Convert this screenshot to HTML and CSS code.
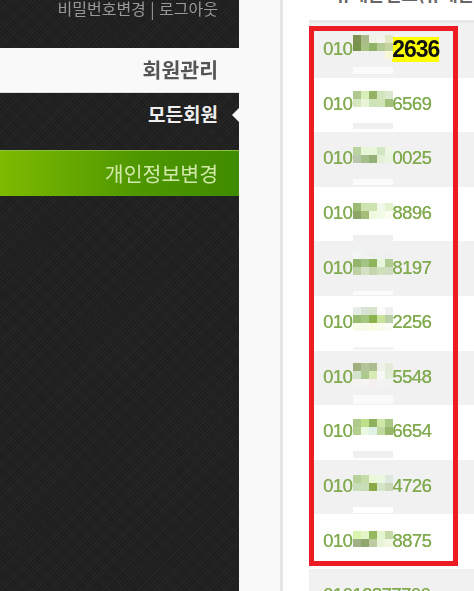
FILE: index.html
```html
<!DOCTYPE html>
<html lang="ko">
<head>
  <meta charset="UTF-8">
  <title>회원관리</title>
  <link rel="stylesheet" href="styles.css">
</head>
<body>
  <div class="sidebar">
    <div class="user-links">비밀번호변경 | 로그아웃</div>
    <div class="menu-title">회원관리</div>
    <div class="menu-sub">모든회원</div>
    <div class="menu-green">개인정보변경</div>
  </div>
  <div class="main">
    <div class="heading">휴대폰번호(휴대폰번호)</div>
    <div class="rows">
      <div class="row"><span>010</span><span class="hidden-no"></span><span class="hit">2636</span></div>
      <div class="row"><span>010</span><span class="hidden-no"></span><span>6569</span></div>
      <div class="row"><span>010</span><span class="hidden-no"></span><span>0025</span></div>
      <div class="row"><span>010</span><span class="hidden-no"></span><span>8896</span></div>
      <div class="row"><span>010</span><span class="hidden-no"></span><span>8197</span></div>
      <div class="row"><span>010</span><span class="hidden-no"></span><span>2256</span></div>
      <div class="row"><span>010</span><span class="hidden-no"></span><span>5548</span></div>
      <div class="row"><span>010</span><span class="hidden-no"></span><span>6654</span></div>
      <div class="row"><span>010</span><span class="hidden-no"></span><span>4726</span></div>
      <div class="row"><span>010</span><span class="hidden-no"></span><span>8875</span></div>
      <div class="row"><span>01012877700</span></div>
    </div>
  </div>

  <!-- 모자이크 -->
  <svg class="mosaic" width="40" height="591" shape-rendering="crispEdges">
    <rect y="67" width="40" height="7" fill="#fbfbfb"/>
    <rect y="123" width="40" height="6" fill="#f0f0f0"/>
    <rect y="179" width="40" height="6" fill="#fbfbfb"/>
    <rect y="235" width="40" height="6" fill="#f0f0f0"/>
    <rect y="291" width="40" height="4" fill="#fbfbfb"/>
    <rect y="347" width="40" height="3" fill="#f3f3f3"/>
    <rect y="395" width="40" height="9" fill="#fafafa"/>
    <rect y="451" width="40" height="7" fill="#f0f0f0"/>
    <rect y="507" width="40" height="6" fill="#fff"/>
    <g class="cells">
      <rect x="0" y="35" fill="#7d9150"/><rect x="8" y="35" fill="#a9b98a"/><rect x="16" y="35" fill="#eef3e6"/><rect x="24" y="35" fill="#f4f6ee"/><rect x="32" y="35" fill="#e3e8c0"/>
      <rect x="0" y="43" fill="#77954a"/><rect x="8" y="43" fill="#a8c184"/><rect x="16" y="43" fill="#8fb267"/><rect x="24" y="43" fill="#b5cb95"/><rect x="32" y="43" fill="#c4d3a0"/>
      <rect x="32" y="51" fill="#f8f8d8"/>

      <rect x="0" y="91" fill="#b0c78e"/><rect x="8" y="91" fill="#d8edb8"/><rect x="16" y="91" fill="#93b264"/><rect x="24" y="91" fill="#d3e6bb"/><rect x="32" y="91" fill="#dbe8cd"/>
      <rect x="0" y="99" fill="#d6e6bd"/><rect x="8" y="99" fill="#e8f4d8"/><rect x="16" y="99" fill="#cde3b8"/><rect x="24" y="99" fill="#cfe3b5"/><rect x="32" y="99" fill="#a2bf7c"/>

      <rect x="0" y="147" fill="#b8d3a0"/><rect x="8" y="147" fill="#e8f6d8"/><rect x="16" y="147" fill="#e8f6d8"/><rect x="24" y="147" fill="#d3e6c4"/><rect x="32" y="147" fill="#eef7e4"/>
      <rect x="0" y="155" fill="#b8c8ac"/><rect x="8" y="155" fill="#a5bf8c"/><rect x="16" y="155" fill="#93b078"/><rect x="24" y="155" fill="#e3f0d5"/><rect x="32" y="155" fill="#eaf5e0"/>

      <rect x="0" y="203" fill="#9dbc73"/><rect x="8" y="203" fill="#cfe3b0"/><rect x="16" y="203" fill="#cfe3b0"/><rect x="24" y="203" fill="#f2f9ea"/><rect x="32" y="203" fill="#e3f2cf"/>
      <rect x="0" y="211" fill="#8da568"/><rect x="8" y="211" fill="#a5bd78"/><rect x="16" y="211" fill="#f0f8e0"/><rect x="24" y="211" fill="#f4fae8"/><rect x="32" y="211" fill="#fbfdf3"/>

      <rect x="0" y="251" fill="#f3f6f6"/><rect x="8" y="251" fill="#f0f2f0"/><rect x="16" y="251" fill="#eef0ee"/><rect x="24" y="251" fill="#eff0f0"/><rect x="32" y="251" fill="#edeeee"/>
      <rect x="0" y="259" fill="#93b56c"/><rect x="8" y="259" fill="#a3c285"/><rect x="16" y="259" fill="#8fb55c"/><rect x="24" y="259" fill="#e8f6dd"/><rect x="32" y="259" fill="#b0cc94"/>
      <rect x="0" y="267" fill="#bdd0a3"/><rect x="8" y="267" fill="#d5e0c5"/><rect x="16" y="267" fill="#c5d6ae"/><rect x="24" y="267" fill="#d0e0bd"/><rect x="32" y="267" fill="#cfdcc0"/>

      <rect x="0" y="307" fill="#e4eee6"/><rect x="8" y="307" fill="#d8e4d3"/><rect x="16" y="307" fill="#d6e4cc"/><rect x="24" y="307" fill="#fbfbfb"/><rect x="32" y="307" fill="#eef0ee"/>
      <rect x="0" y="315" fill="#98bc70"/><rect x="8" y="315" fill="#a4c480"/><rect x="16" y="315" fill="#8cb24c"/><rect x="24" y="315" fill="#cbe49d"/><rect x="32" y="315" fill="#b8cfa8"/>
      <rect x="0" y="323" fill="#f8fbe8"/><rect x="8" y="323" fill="#f8fbe8"/><rect x="16" y="323" fill="#fbfbe8"/><rect x="24" y="323" fill="#f8fbee"/><rect x="32" y="323" fill="#fbfcf4"/>

      <rect x="0" y="363" fill="#a2b080"/><rect x="8" y="363" fill="#b5c59a"/><rect x="16" y="363" fill="#adbd92"/><rect x="24" y="363" fill="#eef2e8"/><rect x="32" y="363" fill="#e4ead8"/>
      <rect x="0" y="371" fill="#d2e4cc"/><rect x="8" y="371" fill="#acc98f"/><rect x="16" y="371" fill="#d8ebb5"/><rect x="24" y="371" fill="#f6f8f6"/><rect x="32" y="371" fill="#e4edd9"/>
      <rect x="0" y="379" fill="#f5f2f2"/><rect x="8" y="379" fill="#f3f4f3"/><rect x="16" y="379" fill="#f6eff0"/><rect x="24" y="379" fill="#f3f3f3"/><rect x="32" y="379" fill="#f2f2f2"/>

      <rect x="0" y="419" fill="#aecb8c"/><rect x="8" y="419" fill="#bfe08a"/><rect x="16" y="419" fill="#8fb05c"/><rect x="24" y="419" fill="#cfe8a8"/><rect x="32" y="419" fill="#a9c883"/>
      <rect x="0" y="427" fill="#b2cf8f"/><rect x="8" y="427" fill="#eaf8e0"/><rect x="16" y="427" fill="#e0f2e8"/><rect x="24" y="427" fill="#c0d9a0"/><rect x="32" y="427" fill="#98b56c"/>

      <rect x="0" y="475" fill="#b8d09a"/><rect x="8" y="475" fill="#c5dda8"/><rect x="16" y="475" fill="#eaf8d8"/><rect x="24" y="475" fill="#eaf8e0"/><rect x="32" y="475" fill="#dfe8df"/>
      <rect x="0" y="483" fill="#c8dcb8"/><rect x="8" y="483" fill="#c8dcb8"/><rect x="16" y="483" fill="#8aaa48"/><rect x="24" y="483" fill="#d5e5c8"/><rect x="32" y="483" fill="#c8d8b8"/>

      <rect x="0" y="531" fill="#d8f5b0"/><rect x="8" y="531" fill="#e4f5c8"/><rect x="16" y="531" fill="#94b860"/><rect x="24" y="531" fill="#e4f5d0"/><rect x="32" y="531" fill="#c4d8a8"/>
      <rect x="0" y="539" fill="#a2b088"/><rect x="8" y="539" fill="#90a870"/><rect x="16" y="539" fill="#bccca0"/><rect x="24" y="539" fill="#e8f4d8"/><rect x="32" y="539" fill="#f0f6e0"/>
    </g>
  </svg>

  <div class="red-box"></div>
</body>
</html>
```

FILE: styles.css
```css
html, body { height: 100%; }
body { margin: 0; display: flex; height: 591px; overflow: hidden; background: #f9f9f9; font-family: "Noto Sans CJK KR", "Liberation Sans", sans-serif; }

.sidebar { width: 239px; flex: none; margin-right: 41px; background-color: #212121; background-image: repeating-linear-gradient(45deg, rgba(0,0,0,.12) 0 1px, transparent 1px 2px), repeating-linear-gradient(-45deg, rgba(255,255,255,.03) 0 1px, transparent 1px 3px); text-align: right; }
.user-links { height: 48px; padding: 0 21px 0 0; box-sizing: border-box; font-size: 16px; line-height: 17px; color: #999; filter: blur(.4px); }
.menu-title { height: 45px; padding-right: 21px; line-height: 43px; font-size: 20.5px; font-weight: bold; color: #555; background: #f9f9f9; border-bottom: 1px solid #ddd; box-sizing: border-box; filter: blur(.3px); }
.menu-sub { position: relative; height: 57px; padding: 5px 21px 0 0; box-sizing: border-box; font-size: 19px; line-height: 32px; font-weight: bold; color: #eee; }
.menu-sub::after { content: ""; position: absolute; right: 0; top: 15px; border: 7px solid transparent; border-left: 0; border-right-color: #f9f9f9; }
.menu-green { height: 46px; padding-right: 21px; box-sizing: border-box; font-size: 20.5px; line-height: 45px; color: #d0e8a8; background: linear-gradient(90deg, #7dba00, #4d9600 60%, #3f8c00); border-top: 1px solid #8cbf3c; filter: blur(.2px); }

.main { flex: 1; min-width: 0; border-left: 3px solid #e6e6e6; background: #fff; padding-left: 26px; overflow: hidden; }
.heading { height: 19px; margin-top: -16px; padding-left: 26px; font-size: 18px; line-height: 18px; font-weight: bold; color: #666; white-space: nowrap; }
.rows { border-top: 3px solid #e8e8e8; margin-top: 17px; }
.row { display: flex; align-items: center; height: 54.6px; padding-left: 14px; font-family: "Liberation Sans", Arial, sans-serif; font-size: 18.5px; letter-spacing: -.55px; line-height: 20px; color: #82ab50; white-space: nowrap; }
.row:nth-child(odd) { background: #f1f1f1; }
.row span { margin-top: -2px; filter: blur(.35px); text-shadow: .35px 0 0 currentColor; }
.hidden-no { width: 40px; flex: none; }
.row .hit { background: #ff0; color: #111; font-size: 23px; letter-spacing: -1.05px; font-weight: bold; line-height: 25px; margin-top: -1px; text-shadow: none; }

.mosaic { position: absolute; left: 353px; top: 0; }
.cells rect { width: 8px; height: 8px; }
.red-box { position: absolute; left: 309px; top: 26px; width: 149px; height: 540px; box-sizing: border-box; border: 5px solid #ed1c24; }
```
